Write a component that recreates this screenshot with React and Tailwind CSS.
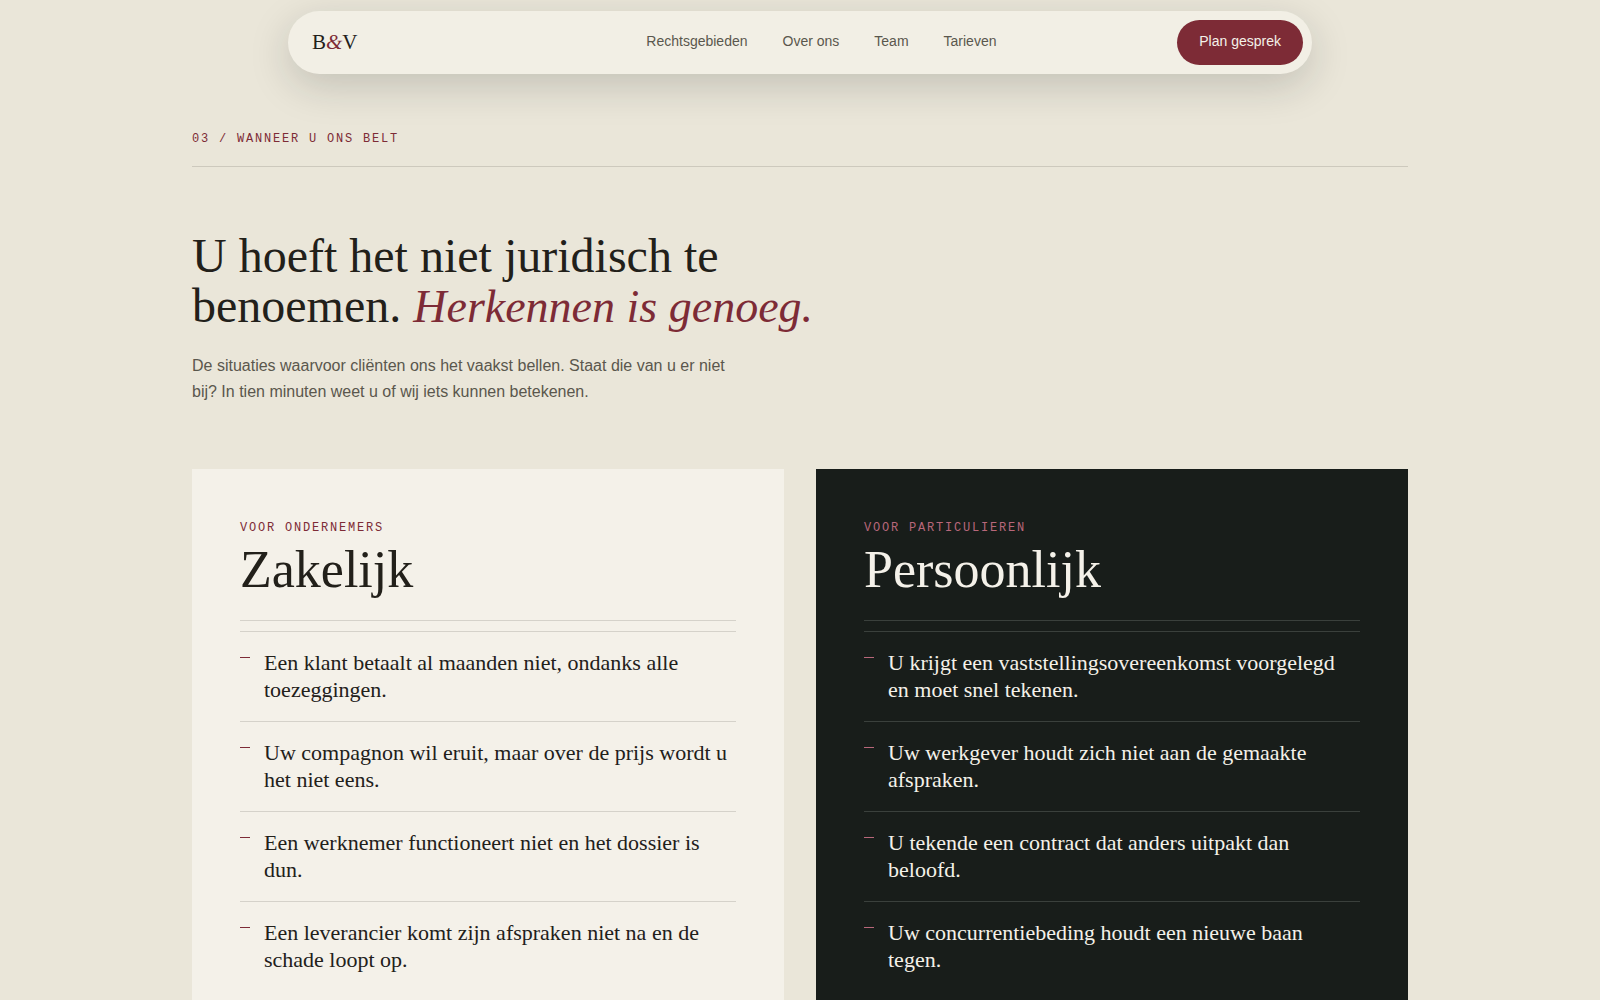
import React from "react";

const navLinks = ["Rechtsgebieden", "Over ons", "Team", "Tarieven"];

const business = [
  "Een klant betaalt al maanden niet, ondanks alle toezeggingen.",
  "Uw compagnon wil eruit, maar over de prijs wordt u het niet eens.",
  "Een werknemer functioneert niet en het dossier is dun.",
  "Een leverancier komt zijn afspraken niet na en de schade loopt op.",
];

const personal = [
  "U krijgt een vaststellingsovereenkomst voorgelegd en moet snel tekenen.",
  "Uw werkgever houdt zich niet aan de gemaakte afspraken.",
  "U tekende een contract dat anders uitpakt dan beloofd.",
  "Uw concurrentiebeding houdt een nieuwe baan tegen.",
];

function Header() {
  return (
    <header className="sticky top-0 z-10 px-4 pt-[11px]">
      <div className="mx-auto flex h-[63px] max-w-[1024px] items-center justify-between rounded-full bg-[#f2efe5] pl-6 pr-[9px] shadow-[0_12px_40px_rgba(24,29,26,0.18)]">
        <a href="#" className="pb-[2px] font-['Liberation_Serif',serif] text-[21px] leading-8 text-[#22201a]">
          B<em className="text-[#7d2b36]">&amp;</em>V
        </a>
        <nav className="flex gap-[35px] pb-[3px] pl-[108px]">
          {navLinks.map((label) => (
            <a key={label} href="#" className="text-sm text-[#5a574d] hover:text-[#22201a]">
              {label}
            </a>
          ))}
        </nav>
        <button className="h-[45px] rounded-full bg-[#7d2b36] px-[22px] pb-[3px] text-sm text-[#f4f1e9]">
          Plan gesprek
        </button>
      </div>
    </header>
  );
}

function SituationCard({ label, title, items, dark }) {
  const line = dark ? "border-[#3a403c]" : "border-[#d5d2ca]";

  return (
    <article
      className={`px-12 pt-[49px] pb-12 ${dark ? "bg-[#181d1a] text-[#f4f1e9]" : "bg-[#f4f1e9] text-[#22201a]"}`}
    >
      <p
        className={`font-['Liberation_Mono',monospace] text-xs leading-5 tracking-[0.15em] uppercase ${
          dark ? "text-[#b8677a]" : "text-[#7d2b36]"
        }`}
      >
        {label}
      </p>
      <h3 className="mt-1 font-['Liberation_Serif',serif] text-[52px] leading-[56px]">{title}</h3>
      <div className={`mt-[22px] border-t ${line}`} />
      <ul className="mt-[10px]">
        {items.map((item) => (
          <li key={item} className={`flex gap-[14px] border-t pt-[17px] pb-[18px] ${line}`}>
            <span className={`mt-2 h-px w-[10px] shrink-0 ${dark ? "bg-[#b8677a]" : "bg-[#7d2b36]"}`} />
            <span className="font-['Liberation_Serif',serif] text-[22px] leading-[27px]">{item}</span>
          </li>
        ))}
      </ul>
    </article>
  );
}

function App() {
  return (
    <div className="min-h-screen bg-[#eae6d9] font-['Liberation_Sans',sans-serif] text-[#22201a]">
      <Header />
      <main className="mx-auto max-w-[1280px] px-8 pt-[55px]">
        <p className="border-b border-[#cdc9bd] pb-[17px] font-['Liberation_Mono',monospace] text-xs leading-5 tracking-[0.15em] text-[#7d2b36] uppercase">
          03 / Wanneer u ons belt
        </p>

        <h2 className="mt-[64px] max-w-[680px] font-['Liberation_Serif',serif] text-[48px] leading-[50px]">
          U hoeft het niet juridisch te benoemen.{" "}
          <em className="text-[46px] leading-none text-[#7d2b36]">Herkennen is genoeg.</em>
        </h2>
        <p className="mt-[22px] max-w-[544px] text-base leading-[26px] text-[#5a574d]">
          De situaties waarvoor cliënten ons het vaakst bellen. Staat die van u er niet bij? In tien
          minuten weet u of wij iets kunnen betekenen.
        </p>

        <div className="mt-16 grid grid-cols-1 gap-8 lg:grid-cols-2">
          <SituationCard label="Voor ondernemers" title="Zakelijk" items={business} />
          <SituationCard label="Voor particulieren" title="Persoonlijk" items={personal} dark />
        </div>
      </main>
    </div>
  );
}

export default App;
